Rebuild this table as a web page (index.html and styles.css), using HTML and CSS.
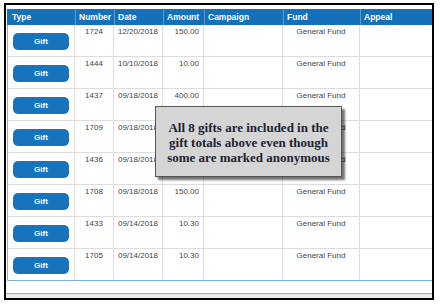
FILE: index.html
```html
<!DOCTYPE html>
<html>
<head>
<meta charset="utf-8">
<link rel="stylesheet" href="styles.css">
</head>
<body>
<div class="frame">
  <div class="table">
    <div class="row head">
      <div class="hc first">Type</div>
      <div class="hc">Number</div>
      <div class="hc">Date</div>
      <div class="hc">Amount</div>
      <div class="hc">Campaign</div>
      <div class="hc">Fund</div>
      <div class="hc">Appeal</div>
    </div>
    <div class="tbody">
      <div class="row">
        <div class="c type"><span class="btn">Gift</span></div>
        <div class="c center">1724</div>
        <div class="c center">12/20/2018</div>
        <div class="c right">150.00</div>
        <div class="c"></div>
        <div class="c center">General Fund</div>
        <div class="c last"></div>
      </div>
      <div class="row">
        <div class="c type"><span class="btn">Gift</span></div>
        <div class="c center">1444</div>
        <div class="c center">10/10/2018</div>
        <div class="c right">10.00</div>
        <div class="c"></div>
        <div class="c center">General Fund</div>
        <div class="c last"></div>
      </div>
      <div class="row">
        <div class="c type"><span class="btn">Gift</span></div>
        <div class="c center">1437</div>
        <div class="c center">09/18/2018</div>
        <div class="c right">400.00</div>
        <div class="c"></div>
        <div class="c center">General Fund</div>
        <div class="c last"></div>
      </div>
      <div class="row">
        <div class="c type"><span class="btn">Gift</span></div>
        <div class="c center">1709</div>
        <div class="c center">09/18/2018</div>
        <div class="c right">150.00</div>
        <div class="c"></div>
        <div class="c center">General Fund</div>
        <div class="c last"></div>
      </div>
      <div class="row">
        <div class="c type"><span class="btn">Gift</span></div>
        <div class="c center">1436</div>
        <div class="c center">09/18/2018</div>
        <div class="c right">400.00</div>
        <div class="c"></div>
        <div class="c center">General Fund</div>
        <div class="c last"></div>
      </div>
      <div class="row">
        <div class="c type"><span class="btn">Gift</span></div>
        <div class="c center">1708</div>
        <div class="c center">09/18/2018</div>
        <div class="c right">150.00</div>
        <div class="c"></div>
        <div class="c center">General Fund</div>
        <div class="c last"></div>
      </div>
      <div class="row">
        <div class="c type"><span class="btn">Gift</span></div>
        <div class="c center">1433</div>
        <div class="c center">09/14/2018</div>
        <div class="c right">10.30</div>
        <div class="c"></div>
        <div class="c center">General Fund</div>
        <div class="c last"></div>
      </div>
      <div class="row lastrow">
        <div class="c type"><span class="btn">Gift</span></div>
        <div class="c center">1705</div>
        <div class="c center">09/14/2018</div>
        <div class="c right">10.30</div>
        <div class="c"></div>
        <div class="c center">General Fund</div>
        <div class="c last"></div>
      </div>
    </div>
  </div>
  <div class="footer"></div>
</div>
<div class="note">All 8 gifts are included in the gift totals above even though some are marked anonymous</div>
</body>
</html>
```

FILE: styles.css
```css
html, body {
  margin: 0;
  padding: 0;
  background: #ffffff;
}
body {
  font-family: "Liberation Sans", Arial, sans-serif;
  position: relative;
  width: 440px;
  height: 306px;
  overflow: hidden;
}
.frame {
  box-sizing: border-box;
  width: 430px;
  height: 297px;
  margin: 3px 0 0 4px;
  border: 2px solid #000;
  padding-top: 4px;
  display: flex;
  flex-direction: column;
}
.table {
  padding-left: 1px;
}
.row {
  display: grid;
  grid-template-columns: 67px 39px 49px 41px 79px 77px 72px;
}
.head {
  height: 16px;
  background: #1471b9;
  border-left: 1px solid #1471b9;
}
.hc {
  color: #fff;
  font-weight: bold;
  font-size: 8.5px;
  line-height: 16px;
  padding-left: 3px;
  border-left: 1px solid #5a9bd2;
  white-space: nowrap;
  overflow: hidden;
}
.hc.first {
  border-left: none;
  padding-left: 4px;
}
.tbody {
  border-left: 1px solid #7fb3e0;
}
.tbody .row {
  height: 32px;
  box-sizing: border-box;
  border-bottom: 1px solid #dddddd;
}
.tbody .row.lastrow {
  border-bottom-color: #7fb3e0;
}
.c {
  border-right: 1px solid #dddddd;
  font-size: 8px;
  line-height: 10px;
  color: #444;
  padding-top: 2px;
  white-space: nowrap;
}
.c.last {
  border-right: none;
}
.center {
  text-align: center;
}
.right {
  text-align: right;
  padding-right: 4px;
}
.type {
  padding-top: 8px;
  padding-left: 5px;
}
.btn {
  display: block;
  width: 56px;
  height: 17px;
  border-radius: 5px;
  background: #1873ba;
  color: #fff;
  font-weight: bold;
  font-size: 8px;
  line-height: 17px;
  text-align: center;
}
.footer {
  margin-top: 12px;
  border-top: 1px solid #7fb3e0;
  height: 4px;
  background: #ececec;
}
.note {
  position: absolute;
  left: 155px;
  top: 106px;
  width: 187px;
  height: 71px;
  box-sizing: border-box;
  background: #d5d5d5;
  border: 1px solid #555;
  box-shadow: 3px 3px 2px rgba(0, 0, 0, 0.55);
  font-family: "Liberation Serif", "Times New Roman", serif;
  font-weight: bold;
  font-size: 13px;
  line-height: 15px;
  color: #1d2233;
  text-align: center;
  padding: 13px 6px 0 6px;
}
```
